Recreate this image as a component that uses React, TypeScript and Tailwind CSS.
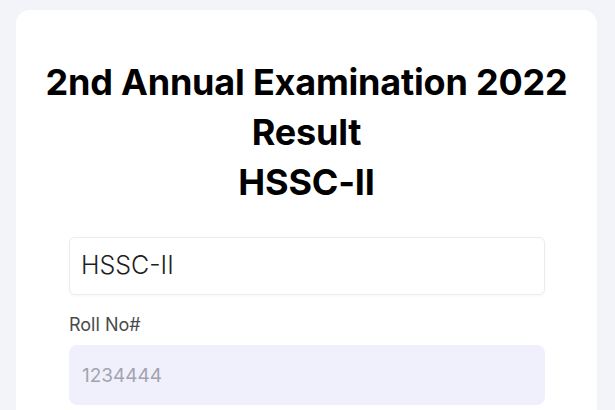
export default function App() {
  return (
    <div className="min-h-screen bg-[#f3f4f9] pt-[10px] pl-[16px] pr-[18px] font-['Inter',sans-serif]">
      <div className="bg-white rounded-[14px] h-[420px] pt-[47px]">
        <h1 className="text-center text-[36px] leading-[50px] font-bold text-black tracking-[-0.2px]">
          2nd Annual Examination 2022
          <br />
          Result
          <br />
          HSSC-II
        </h1>

        <div className="mt-[30px] pl-[53px] w-[529px]">
          {/* exam selector */}
          <div className="h-[58px] rounded-[6px] border border-[#ececec] shadow-[0_1px_3px_rgba(0,0,0,0.04)] flex items-center px-[11px]">
            <span className="text-[25px] font-light text-[#1f1f1f]">HSSC-II</span>
          </div>

          <label className="block mt-[18px] text-[18px] leading-[24px] text-[#4a4a4a]">Roll No#</label>

          <input
            className="mt-[8px] w-full h-[60px] rounded-[8px] bg-[#f0f0fc] px-[13px] text-[19px] placeholder:text-[#a3a3b0] outline-none"
            placeholder="1234444"
          />
        </div>
      </div>
    </div>
  );
}
